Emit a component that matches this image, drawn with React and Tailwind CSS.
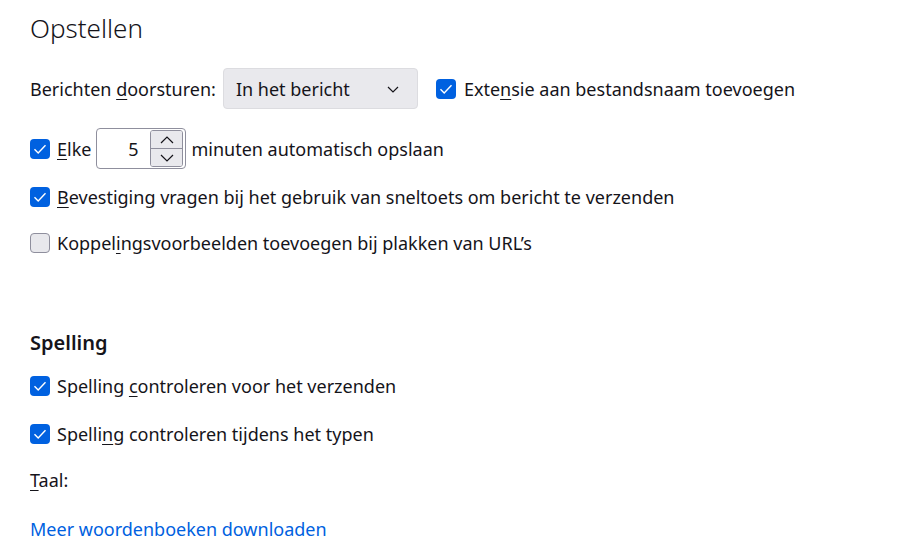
import React from 'react';

const font = { fontFamily: '"Segoe UI", "Noto Sans", sans-serif' };

function Check({ checked }) {
  return checked ? (
    <span className="flex size-5 shrink-0 items-center justify-center rounded-[4px] bg-[#0061e0]">
      <svg viewBox="0 0 20 20" className="size-5" fill="none" stroke="white" strokeWidth="1.4">
        <path d="M4.5 10.2 L8.2 14 L15.5 6.2" />
      </svg>
    </span>
  ) : (
    <span className="size-5 shrink-0 rounded-[4px] border border-[#8f8f9d] bg-[#e8e8ec]" />
  );
}

function Row({ checked, children, className = '' }) {
  return (
    <div className={`flex h-[24px] items-center gap-[7px] ${className}`}>
      <Check checked={checked} />
      <span>{children}</span>
    </div>
  );
}

export default function App() {
  return (
    <div className="h-[547px] w-[908px] bg-white pl-[30px] text-[18px] leading-[24px] text-[#15141a]" style={font}>
      <h1 className="pt-[10px] text-[26px] font-light leading-[36px]">Opstellen</h1>

      <div className="mt-[22px] flex h-[41px] items-center">
        <span>
          Berichten <u className="underline-offset-[3px]">d</u>oorsturen:
        </span>
        <div className="ml-[7px] flex h-[41px] w-[195px] items-center justify-between rounded-[4px] border border-[#dcdce0] bg-[#e9e9ed] pl-[12px] pr-[16px]">
          <span>In het bericht</span>
          <svg viewBox="0 0 16 16" className="size-4" fill="none" stroke="#15141a" strokeWidth="1.2">
            <path d="M3 6 L8 11 L13 6" />
          </svg>
        </div>
        <div className="ml-[18px] flex items-center gap-[8px]">
          <Check checked />
          <span>
            Exte<u className="underline-offset-[3px]">n</u>sie aan bestandsnaam toevoegen
          </span>
        </div>
      </div>

      <div className="mt-[19px] flex h-[41px] items-center">
        <Check checked />
        <span className="ml-[7px]">
          <u className="underline-offset-[3px]">E</u>lke
        </span>
        <div className="ml-[5px] flex h-[41px] w-[90px] items-center rounded-[4px] border border-[#8f8f9d] bg-white pr-[2px]">
          <span className="flex-1 pr-[12px] text-right">5</span>
          <div className="flex h-[37px] w-[33px] flex-col overflow-hidden rounded-[3px] border border-[#8f8f9d]">
            <div className="flex flex-1 items-center justify-center border-b border-[#8f8f9d] bg-[#e9e9ed]">
              <svg viewBox="0 0 16 10" className="h-[10px] w-4" fill="none" stroke="#15141a" strokeWidth="1.2">
                <path d="M2 8 L8 2 L14 8" />
              </svg>
            </div>
            <div className="flex flex-1 items-center justify-center bg-[#e9e9ed]">
              <svg viewBox="0 0 16 10" className="h-[10px] w-4" fill="none" stroke="#15141a" strokeWidth="1.2">
                <path d="M2 2 L8 8 L14 2" />
              </svg>
            </div>
          </div>
        </div>
        <span className="ml-[5px]">minuten automatisch opslaan</span>
      </div>

      <Row checked className="mt-[16px]">
        <u className="underline-offset-[3px]">B</u>evestiging vragen bij het gebruik van sneltoets om bericht te verzenden
      </Row>
      <Row className="mt-[22px]">
        Koppel<u className="underline-offset-[3px]">i</u>ngsvoorbeelden toevoegen bij plakken van URL’s
      </Row>

      <h2 className="mt-[74px] text-[20px] font-semibold leading-[28px]">Spelling</h2>
      <Row checked className="mt-[17px]">
        Spelling <u className="underline-offset-[3px]">c</u>ontroleren voor het verzenden
      </Row>
      <Row checked className="mt-[24px]">
        Spelli<u className="underline-offset-[3px]">n</u>g controleren tijdens het typen
      </Row>
      <div className="mt-[22px]">
        <u className="underline-offset-[3px]">T</u>aal:
      </div>
      <a className="mt-[25px] block text-[#0061e0]">Meer woordenboeken downloaden</a>
    </div>
  );
}
